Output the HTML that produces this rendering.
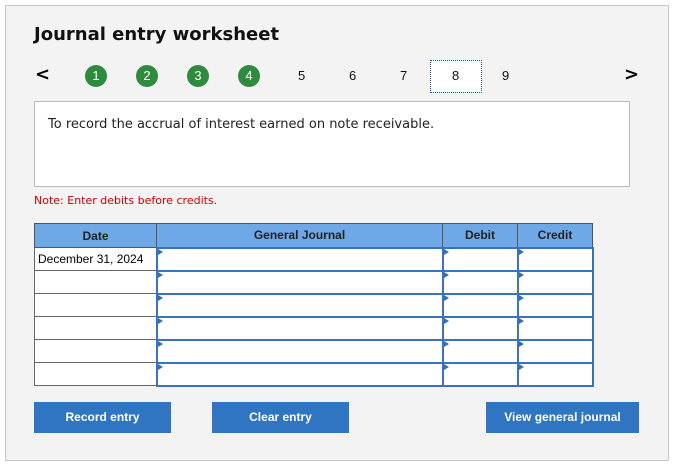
<html><head><style>
body{margin:0;background:#fff;font-family:"Liberation Sans",Arial,sans-serif;}
.p{position:absolute;left:5px;top:5px;width:662px;height:454px;background:#f3f3f3;border:1px solid #c8c8c8;}
.a{position:absolute}
h1{position:absolute;left:34px;top:24px;margin:0;font-family:"DejaVu Sans",Verdana,sans-serif;font-size:18px;font-weight:bold;color:#111;}
.c{position:absolute;width:22px;height:22px;border-radius:50%;background:#2e8b3e;color:#fff;font-size:13px;text-align:center;line-height:22px;top:65px}
.n{position:absolute;top:68px;font-size:13px;color:#111}
.box{position:absolute;left:34px;top:101px;width:594px;height:84px;background:#fff;border:1px solid #bbb;}
table{position:absolute;left:34px;top:223px;border-collapse:collapse;font-size:12px}
tr{height:23px}
th{background:#6fa8e6;border:1px solid #555;height:24px;padding:0;color:#222}
td{border:1px solid #666;padding:0;background:#fff}
td.i{border:2px solid #3b73bb;position:relative}
td.i:before{content:"";position:absolute;left:0;top:0;border-left:5px solid #2f6fc0;border-top:3px solid transparent;border-bottom:3px solid transparent}
.b{position:absolute;top:402px;height:31px;background:#2f75c1;color:#fff;font-size:12px;font-weight:bold;text-align:center;line-height:31px}
.ar{position:absolute;top:64px;font-size:18px;font-weight:bold;font-family:"DejaVu Sans",sans-serif}
</style></head><body>
<div class="p"></div>
<h1>Journal entry worksheet</h1>
<div class="ar" style="left:35px">&lt;</div>
<div class="c" style="left:85px">1</div><div class="c" style="left:136px">2</div><div class="c" style="left:187px">3</div><div class="c" style="left:238px">4</div>
<div class="n" style="left:298px">5</div><div class="n" style="left:349px">6</div><div class="n" style="left:400px">7</div>
<div class="a" style="left:430px;top:60px;width:50px;height:31px;border:1.5px dotted #2a4fa0;background:#fff"></div>
<div class="n" style="left:452px">8</div><div class="n" style="left:502px">9</div>
<div class="ar" style="left:624px">&gt;</div>
<div class="box"></div>
<div class="a" style="left:48px;top:117px;font-size:13px;color:#222;font-family:'DejaVu Sans',Verdana,sans-serif">To record the accrual of interest earned on note receivable.</div>
<div class="a" style="left:34px;top:194px;font-size:11px;color:#c00;font-family:'DejaVu Sans',Verdana,sans-serif">Note: Enter debits before credits.</div>
<table>
<tr><th style="width:121px">Date</th><th style="width:285px">General Journal</th><th style="width:74px">Debit</th><th style="width:74px">Credit</th></tr>
<tr><td style="padding-left:3px">December 31, 2024</td><td class="i"></td><td class="i"></td><td class="i"></td></tr>
<tr><td></td><td class="i"></td><td class="i"></td><td class="i"></td></tr>
<tr><td></td><td class="i"></td><td class="i"></td><td class="i"></td></tr>
<tr><td></td><td class="i"></td><td class="i"></td><td class="i"></td></tr>
<tr><td></td><td class="i"></td><td class="i"></td><td class="i"></td></tr>
<tr><td></td><td class="i"></td><td class="i"></td><td class="i"></td></tr>
</table>
<div class="b" style="left:34px;width:137px">Record entry</div>
<div class="b" style="left:212px;width:137px">Clear entry</div>
<div class="b" style="left:486px;width:153px">View general journal</div>
</body></html>
